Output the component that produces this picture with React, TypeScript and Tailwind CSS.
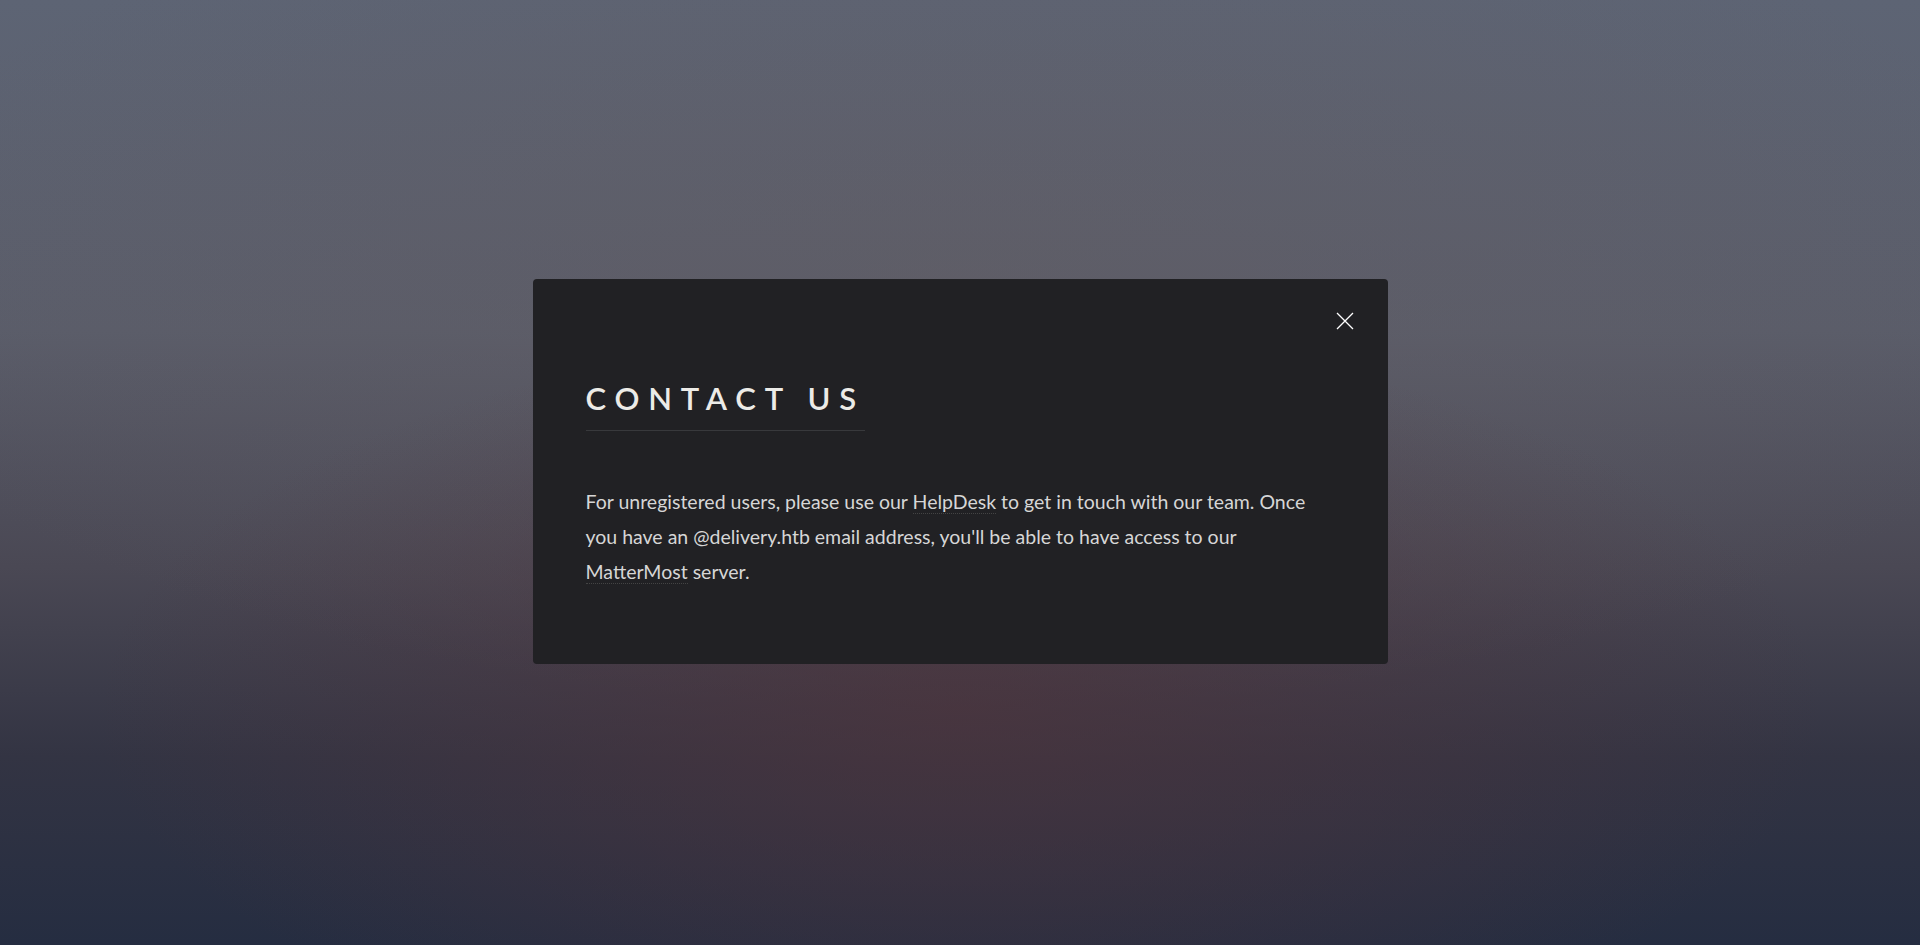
import React from 'react';

const CloseIcon: React.FC = () => (
  <svg width="18" height="18" viewBox="0 0 18 18" className="text-white">
    <path d="M1 1L17 17M17 1L1 17" stroke="currentColor" strokeWidth="1.3" fill="none" />
  </svg>
);

const App: React.FC = () => {
  return (
    <div
      className="w-full h-[945px] flex items-center justify-center bg-[radial-gradient(ellipse_45%_40%_at_50%_75%,rgba(78,52,60,0.7),rgba(78,52,60,0)_100%),radial-gradient(ellipse_60%_45%_at_50%_30%,rgba(98,92,98,0.5),rgba(98,92,98,0)_100%),linear-gradient(180deg,#5d6474_0%,#5a5d6a_35%,#4a4854_60%,#333443_80%,#252d41_100%)]"
      style={{ fontFamily: 'Lato, "Open Sans", sans-serif' }}
    >
      <article className="relative w-[855px] bg-[#212124] rounded-[4px] px-[53px] pt-[96px] pb-[32px] -mt-[2px]">
        <button className="absolute top-0 right-0 w-[85px] h-[85px] flex items-center justify-center">
          <CloseIcon />
        </button>
        <h2 className="w-max text-[31px] leading-[46px] font-semibold tracking-[8.8px] uppercase text-[#ecebe7] border-b border-[#38393c] pb-[9px] mb-[53px]">
          Contact Us
        </h2>
        <p className="text-[19.5px] leading-[35.2px] text-[#d6d6d6] mb-[43px]">
          For unregistered users, please use our{' '}
          <a className="border-b border-dotted border-[#444]">HelpDesk</a> to get in touch with our team. Once
          you have an @delivery.htb email address, you'll be able to have access to our{' '}
          <a className="border-b border-dotted border-[#444]">MatterMost</a> server.
        </p>
      </article>
    </div>
  );
};

export default App;
